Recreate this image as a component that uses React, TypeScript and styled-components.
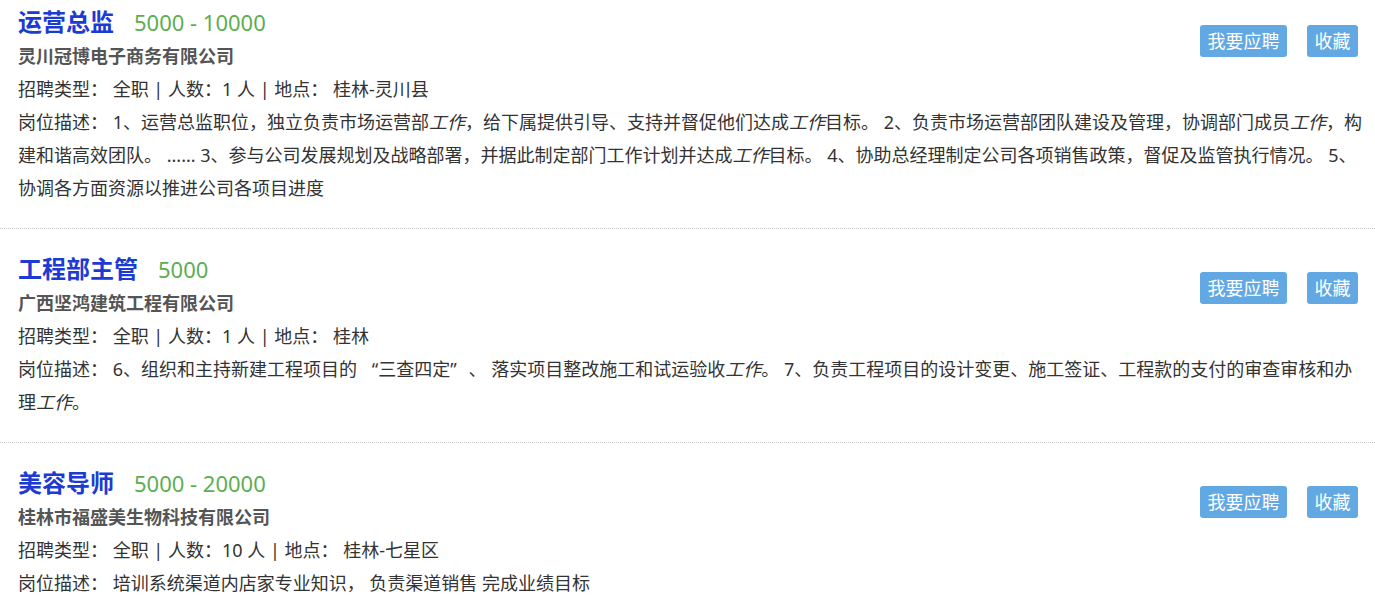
import React from "react";
import styled, { createGlobalStyle } from "styled-components";

const GlobalStyle = createGlobalStyle`
  html, body {
    margin: 0;
    padding: 0;
    background: #fff;
  }
  body {
    font-family: "Noto Sans", "Noto Sans CJK SC", sans-serif;
    color: #333;
  }
`;

interface Job {
  title: string;
  salary: string;
  company: string;
  type: string;
  count: string;
  place: string;
  desc: React.ReactNode;
}

// quoted term, with the wider gaps the original font leaves around the quotes
const Quoted = styled.span`
  margin: 0 12px 0 10px;
`;

const jobs: Job[] = [
  {
    title: "运营总监",
    salary: "5000 - 10000",
    company: "灵川冠博电子商务有限公司",
    type: "全职",
    count: "1",
    place: "桂林-灵川县",
    desc: (
      <>
        1、运营总监职位，独立负责市场运营部<em>工作</em>，给下属提供引导、支持并督促他们达成<em>工作</em>目标。
        2、负责市场运营部团队建设及管理，协调部门成员<em>工作</em>，构建和谐高效团队。 ...... 3、参与公司发展规划及战略部署，并据此制定部门工作计划并达成<em>工作</em>目标。
        4、协助总经理制定公司各项销售政策，督促及监管执行情况。 5、协调各方面资源以推进公司各项目进度
      </>
    ),
  },
  {
    title: "工程部主管",
    salary: "5000",
    company: "广西坚鸿建筑工程有限公司",
    type: "全职",
    count: "1",
    place: "桂林",
    desc: (
      <>
        6、组织和主持新建工程项目的 <Quoted>“三查四定”</Quoted>、 落实项目整改施工和试运验收<em>工作</em>。
        7、负责工程项目的设计变更、施工签证、工程款的支付的审查审核和办理<em>工作</em>。
      </>
    ),
  },
  {
    title: "美容导师",
    salary: "5000 - 20000",
    company: "桂林市福盛美生物科技有限公司",
    type: "全职",
    count: "10",
    place: "桂林-七星区",
    desc: <>培训系统渠道内店家专业知识， 负责渠道销售 完成业绩目标</>,
  },
];

const App: React.FC = () => {
  return (
    <>
      <GlobalStyle />
      <List>
        {jobs.map((job) => (
          <Item key={job.title}>
            <Actions>
              <Button>我要应聘</Button>
              <Button>收藏</Button>
            </Actions>
            <Title>
              {job.title}
              <Salary>{job.salary}</Salary>
            </Title>
            <Company>{job.company}</Company>
            <Line>
              招聘类型： {job.type} | 人数：{job.count} 人 | 地点： {job.place}
            </Line>
            <Line>岗位描述： {job.desc}</Line>
          </Item>
        ))}
      </List>
    </>
  );
};

const List = styled.ul`
  list-style: none;
  margin: 0;
  padding: 0;
`;

const Item = styled.li`
  padding: 22px 10px 23px 18px;
  border-bottom: 1px dotted #c8c8c8;

  &:first-child {
    padding-top: 4px;
  }
  &:last-child {
    border-bottom: none;
  }
`;

const Actions = styled.div`
  float: right;
  display: flex;
  gap: 20px;
  margin: 21px 7px 0 20px;
`;

const Button = styled.button`
  height: 32px;
  padding: 0 7.5px;
  border: none;
  border-radius: 3px;
  background: #62a8e2;
  color: #fff;
  font-family: inherit;
  font-size: 18px;
  line-height: 32px;
  cursor: pointer;
`;

const Title = styled.h3`
  margin: 0;
  font-size: 24px;
  line-height: 36px;
  font-weight: bold;
  color: #1c3bd2;
`;

const Salary = styled.span`
  margin-left: 20px;
  font-size: 22px;
  font-weight: normal;
  color: #5cae50;
`;

const Company = styled.div`
  font-size: 18px;
  line-height: 33px;
  font-weight: bold;
  color: #555;
`;

const Line = styled.p`
  margin: 0;
  font-size: 18px;
  line-height: 33px;
  color: #333;

  em {
    font-style: italic;
  }
`;

export default App;
